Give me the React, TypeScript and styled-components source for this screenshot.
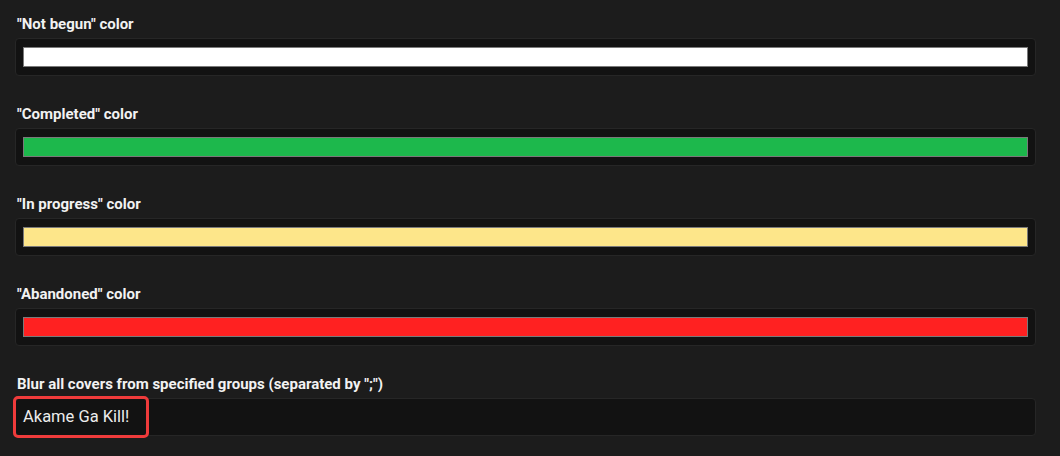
import React from "react";
import styled, { createGlobalStyle } from "styled-components";

const Global = createGlobalStyle`
  html, body { margin: 0; padding: 0; background: #1c1c1c; }
  body { font-family: Roboto, "Liberation Sans", Arial, sans-serif; }
`;

const Page = styled.div`
  width: 1060px;
  height: 456px;
  box-sizing: border-box;
  padding: 16px 24px 0 15px;
  background: #1c1c1c;
  overflow: hidden;
`;

const Section = styled.section`
  display: flex;
  flex-direction: column;
  margin-bottom: 30px;
`;

const Label = styled.label`
  display: block;
  margin: 0 0 5px 2px;
  font-size: 15px;
  line-height: 17px;
  font-weight: 700;
  color: #f2f2f2;
`;

const Field = styled.div`
  position: relative;
  box-sizing: border-box;
  height: 38px;
  display: flex;
  align-items: center;
  padding: 0 7px;
  background: #121212;
  border: 1px solid #262626;
  border-radius: 4px;
`;

const Swatch = styled.div<{ $color: string }>`
  flex: 1;
  height: 20px;
  box-sizing: border-box;
  background: ${(p) => p.$color};
  border: 1px solid #7a7a7a;
`;

const TextValue = styled.div`
  font-size: 16.5px;
  color: #ececec;
  line-height: 20px;
`;

const Highlight = styled.div`
  position: absolute;
  left: -3px;
  top: -3px;
  width: 136px;
  height: 42px;
  box-sizing: border-box;
  border: 3px solid #ef3b3b;
  border-radius: 5px;
  pointer-events: none;
`;

const colors = [
  { label: '"Not begun" color', color: "#ffffff" },
  { label: '"Completed" color', color: "#1db84c" },
  { label: '"In progress" color', color: "#fde68a" },
  { label: '"Abandoned" color', color: "#ff2121" },
];

export default function App() {
  return (
    <>
      <Global />
      <Page>
        {colors.map((c) => (
          <Section key={c.label}>
            <Label>{c.label}</Label>
            <Field>
              <Swatch $color={c.color} />
            </Field>
          </Section>
        ))}
        <Section>
          <Label>Blur all covers from specified groups (separated by ";")</Label>
          <Field>
            <TextValue>Akame Ga Kill!</TextValue>
            <Highlight />
          </Field>
        </Section>
      </Page>
    </>
  );
}
